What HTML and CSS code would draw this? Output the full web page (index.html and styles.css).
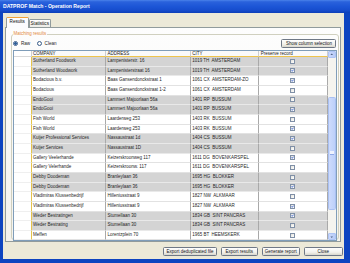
FILE: index.html
```html
<!DOCTYPE html>
<html lang="en">
<head>
  <meta charset="UTF-8">
  <title>DATPROF Match - Operation Report</title>
  <link rel="stylesheet" href="styles.css">
</head>
<body>
  <div class="window">
    <div class="titlebar">DATPROF Match - Operation Report</div>

    <div class="frame">
      <div class="client">
        <!-- Tabs -->
        <div class="tabs">
          <div class="tab active">Results</div>
          <div class="tab">Statistics</div>
        </div>

        <div class="tabpage">
          <fieldset class="group">
            <legend>Matching results</legend>

            <div class="toolbar">
              <label class="radio"><span class="radio-dot on"></span>Raw</label>
              <label class="radio"><span class="radio-dot"></span>Clean</label>
              <button class="btn btn-columns" type="button">Show column selection</button>
            </div>

            <!-- Results grid -->
            <div class="grid">
              <div class="grid-body">
                <div class="row head">
                  <div class="cell rh"></div>
                  <div class="cell">COMPANY</div>
                  <div class="cell">ADDRESS</div>
                  <div class="cell">CITY</div>
                  <div class="cell">Preserve record</div>
                </div>

                <div class="row gray">
                  <div class="cell rh"></div>
                  <div class="cell">Sutherland Foodwork</div>
                  <div class="cell">Lampenisterstr. 16</div>
                  <div class="cell">1019 TH  AMSTERDAM</div>
                  <div class="cell chk"><span class="box"></span></div>
                </div>
                <div class="row gray">
                  <div class="cell rh"></div>
                  <div class="cell">Sutherland Woodwork</div>
                  <div class="cell">Lampenisterstraat 16</div>
                  <div class="cell">1019 TH  AMSTERDAM</div>
                  <div class="cell chk"><span class="box on"><svg viewBox="0 0 10 10"><path d="M2 5 4.2 7.6 8.4 2.2"/></svg></span></div>
                </div>
                <div class="row">
                  <div class="cell rh"></div>
                  <div class="cell">Bodacious b.v.</div>
                  <div class="cell">Baas Gansendonckstraat 1</div>
                  <div class="cell">1061 CX  AMSTERDAM-ZO</div>
                  <div class="cell chk"><span class="box on"><svg viewBox="0 0 10 10"><path d="M2 5 4.2 7.6 8.4 2.2"/></svg></span></div>
                </div>
                <div class="row">
                  <div class="cell rh"></div>
                  <div class="cell">Bodacious</div>
                  <div class="cell">Baas Gansendonckstraat 1-2</div>
                  <div class="cell">1061 CX  AMSTERDAM</div>
                  <div class="cell chk"><span class="box"></span></div>
                </div>
                <div class="row gray">
                  <div class="cell rh"></div>
                  <div class="cell">EndoGooi</div>
                  <div class="cell">Lammert Majoorlaan 56a</div>
                  <div class="cell">1401 RP  BUSSUM</div>
                  <div class="cell chk"><span class="box"></span></div>
                </div>
                <div class="row gray">
                  <div class="cell rh"></div>
                  <div class="cell">EndoGooi</div>
                  <div class="cell">Lammert Majoorlaan 56a</div>
                  <div class="cell">1401 RP  BUSSUM</div>
                  <div class="cell chk"><span class="box on"><svg viewBox="0 0 10 10"><path d="M2 5 4.2 7.6 8.4 2.2"/></svg></span></div>
                </div>
                <div class="row">
                  <div class="cell rh"></div>
                  <div class="cell">Fish World</div>
                  <div class="cell">Laarderweg 253</div>
                  <div class="cell">1403 RK  BUSSUM</div>
                  <div class="cell chk"><span class="box"></span></div>
                </div>
                <div class="row">
                  <div class="cell rh"></div>
                  <div class="cell">Fish World</div>
                  <div class="cell">Laarderweg 253</div>
                  <div class="cell">1403 RK  BUSSUM</div>
                  <div class="cell chk"><span class="box on"><svg viewBox="0 0 10 10"><path d="M2 5 4.2 7.6 8.4 2.2"/></svg></span></div>
                </div>
                <div class="row gray">
                  <div class="cell rh"></div>
                  <div class="cell">Kuijer Professional Services</div>
                  <div class="cell">Nassaustraat 1d</div>
                  <div class="cell">1404 CS  BUSSUM</div>
                  <div class="cell chk"><span class="box on"><svg viewBox="0 0 10 10"><path d="M2 5 4.2 7.6 8.4 2.2"/></svg></span></div>
                </div>
                <div class="row gray">
                  <div class="cell rh"></div>
                  <div class="cell">Kuijer Services</div>
                  <div class="cell">Nassaustraat 1D</div>
                  <div class="cell">1404 CS  BUSSUM</div>
                  <div class="cell chk"><span class="box"></span></div>
                </div>
                <div class="row">
                  <div class="cell rh"></div>
                  <div class="cell">Gallery Veelerhande</div>
                  <div class="cell">Keizerskroonweg 117</div>
                  <div class="cell">1611 DG  BOVENKARSPEL</div>
                  <div class="cell chk"><span class="box on"><svg viewBox="0 0 10 10"><path d="M2 5 4.2 7.6 8.4 2.2"/></svg></span></div>
                </div>
                <div class="row">
                  <div class="cell rh"></div>
                  <div class="cell">Gallery Velerhande</div>
                  <div class="cell">Keizerskroonw. 117</div>
                  <div class="cell">1611 DG  BOVENKARSPEL</div>
                  <div class="cell chk"><span class="box"></span></div>
                </div>
                <div class="row gray">
                  <div class="cell rh"></div>
                  <div class="cell">Debby Doodeman</div>
                  <div class="cell">Branleylaan 36</div>
                  <div class="cell">1695 HG  BLOKKER</div>
                  <div class="cell chk"><span class="box"></span></div>
                </div>
                <div class="row gray">
                  <div class="cell rh"></div>
                  <div class="cell">Debby Doodeman</div>
                  <div class="cell">Branleylaan 36</div>
                  <div class="cell">1695 HG  BLOKKER</div>
                  <div class="cell chk"><span class="box on"><svg viewBox="0 0 10 10"><path d="M2 5 4.2 7.6 8.4 2.2"/></svg></span></div>
                </div>
                <div class="row">
                  <div class="cell rh"></div>
                  <div class="cell">Vladimiras Klussenbedrijf</div>
                  <div class="cell">Hilleniusstraat 9</div>
                  <div class="cell">1827 NW  ALKMAAR</div>
                  <div class="cell chk"><span class="box"></span></div>
                </div>
                <div class="row">
                  <div class="cell rh"></div>
                  <div class="cell">Vladimiras Klussenbedrijf</div>
                  <div class="cell">Hilleniusstraat 9</div>
                  <div class="cell">1827 NW  ALKMAAR</div>
                  <div class="cell chk"><span class="box on"><svg viewBox="0 0 10 10"><path d="M2 5 4.2 7.6 8.4 2.2"/></svg></span></div>
                </div>
                <div class="row gray">
                  <div class="cell rh"></div>
                  <div class="cell">Weder Bestratingen</div>
                  <div class="cell">Stumellaan 30</div>
                  <div class="cell">1834 GB  SINT PANCRAS</div>
                  <div class="cell chk"><span class="box on"><svg viewBox="0 0 10 10"><path d="M2 5 4.2 7.6 8.4 2.2"/></svg></span></div>
                </div>
                <div class="row gray">
                  <div class="cell rh"></div>
                  <div class="cell">Weder Bestrating</div>
                  <div class="cell">Stumellaan 30</div>
                  <div class="cell">1834 GB  SINT PANCRAS</div>
                  <div class="cell chk"><span class="box"></span></div>
                </div>
                <div class="row">
                  <div class="cell rh"></div>
                  <div class="cell">Meffen</div>
                  <div class="cell">Lorentzplein 70</div>
                  <div class="cell">1965 BT  HEEMSKERK</div>
                  <div class="cell chk"><span class="box"></span></div>
                </div>
              </div>

              <!-- Vertical scrollbar -->
              <div class="vscroll">
                <div class="sb-btn"><svg viewBox="0 0 6 4"><path d="M0.8 3.2 3 0.8 5.2 3.2z"/></svg></div>
                <div class="sb-track">
                  <div class="sb-thumb"><span class="grip"></span></div>
                </div>
                <div class="sb-btn"><svg viewBox="0 0 6 4"><path d="M0.8 0.8 3 3.2 5.2 0.8z"/></svg></div>
              </div>
            </div>
          </fieldset>
        </div>

        <!-- Bottom buttons -->
        <div class="actions">
          <button class="btn btn-dedup" type="button">Export deduplicated file</button>
          <button class="btn btn-results" type="button">Export results</button>
          <button class="btn btn-report" type="button">Generate report</button>
          <button class="btn btn-close" type="button">Close</button>
        </div>
      </div>
    </div>
  </div>
</body>
</html>
```

FILE: styles.css
```css
/* General */
* {
  box-sizing: border-box;
}

body {
  margin: 0;
  width: 350px;
  height: 263px;
  overflow: hidden;
  font-family: "Liberation Sans", Arial, sans-serif;
  font-size: 4.5px;
  color: #1e1e1e;
  background: #0d44c0;
}

/* Window chrome */
.window {
  height: 263px;
  display: flex;
  flex-direction: column;
}

.titlebar {
  height: 13px;
  flex: none;
  padding-left: 3px;
  line-height: 12px;
  font-size: 5.1px;
  font-weight: bold;
  color: #fff;
  background: linear-gradient(180deg, #4a82ea 0%, #2a62dc 14%, #1c55d6 50%, #164ccc 80%, #0d3fb8 100%);
}

.frame {
  flex: 1;
  display: flex;
  padding: 0 6px 4px 3px;
  background: #0d44c0;
}

.client {
  flex: 1;
  display: flex;
  flex-direction: column;
  padding: 3px 1.5px 0 1.5px;
  background: #ece9d8;
}

/* Tabs */
.tabs {
  height: 11px;
  flex: none;
  display: flex;
  align-items: flex-end;
  padding-left: 1.5px;
}

.tab {
  width: 21.5px;
  height: 8px;
  margin-left: 0.5px;
  border: 1px solid #919b9c;
  border-bottom: none;
  border-radius: 1.5px 1.5px 0 0;
  background: linear-gradient(#ffffff, #ecebe6);
  font-size: 4.6px;
  line-height: 7px;
  text-align: center;
  color: #111;
}

.tab.active {
  width: 22.5px;
  height: 11px;
  margin-left: 0;
  margin-bottom: -1px;
  position: relative;
  z-index: 1;
  border-top: 1.5px solid #f2a33a;
  background: #fcfcfe;
  line-height: 8.5px;
}

.tabpage {
  height: 215px;
  flex: none;
  display: flex;
  flex-direction: column;
  margin-right: 2px;
  border: 1px solid #919b9c;
  background: linear-gradient(#fdfdfd, #f4f3ee);
}

/* Group box */
.group {
  flex: 1;
  min-width: 0;
  min-height: 0;
  display: flex;
  flex-direction: column;
  margin: 3px 1px 1.5px 5.5px;
  padding: 0 0.8px 1.2px 0.5px;
  border: 1px solid #d0d0bf;
  border-radius: 3px;
}

.group legend {
  padding: 0 1px;
  font-size: 4.5px;
  line-height: 6px;
  color: #e3883a;
}

.toolbar {
  height: 12.5px;
  flex: none;
  display: flex;
  align-items: center;
  padding-left: 0.8px;
}

.radio {
  display: flex;
  align-items: center;
  gap: 2.7px;
  margin-right: 6.7px;
  font-size: 4.6px;
}

.radio-dot {
  width: 5px;
  height: 5px;
  border-radius: 50%;
  border: 0.8px solid #3b5f8c;
  background: radial-gradient(circle, #ffffff 40%, #dcdad0);
}

.radio-dot.on {
  background: radial-gradient(circle, #2f5f9a 0 1.2px, #ffffff 1.5px 60%, #dcdad0);
}

/* Buttons */
.btn {
  height: 9.3px;
  padding: 0;
  font-family: inherit;
  font-size: 4.5px;
  color: #111;
  border: 1px solid #6f7886;
  border-radius: 1.5px;
  background: linear-gradient(#fefefe, #f2f1ec 60%, #d9d7cc);
}

.btn-columns {
  width: 55px;
  height: 8.5px;
  margin-left: auto;
  margin-right: 0.3px;
}

.actions {
  height: 17px;
  flex: none;
  display: flex;
  justify-content: flex-end;
  align-items: flex-start;
  gap: 4px;
  padding-top: 4.7px;
}

.btn-dedup { width: 54px; }
.btn-results { width: 36.5px; }
.btn-report { width: 38.5px; }
.btn-close { width: 38.5px; }

/* Data grid */
.grid {
  flex: 1;
  min-height: 0;
  display: flex;
  border: 1px solid #7f9db9;
  background: #fff;
  overflow: hidden;
}

.grid-body {
  flex: 1;
  overflow: hidden;
}

.row {
  display: grid;
  grid-template-columns: 18px 74.5px 84.7px 68.6px 68.4px;
  height: 9.67px;
}

.cell {
  padding-left: 1.5px;
  border-right: 1px solid #a9a9a9;
  border-bottom: 1px solid #e2e2e2;
  line-height: 8.67px;
  white-space: pre;
  overflow: hidden;
  color: #262626;
}

.cell.rh {
  border-right: 1px solid #e6c44c;
  border-bottom-color: #efefef;
  background: #fff;
}

.row.head {
  height: 6.5px;
}

.head .cell {
  line-height: 5px;
  border-right-color: #cfcfcf;
  border-bottom: 1.5px solid #eec44c;
  background: #fafafa;
  color: #1a1a1a;
}

.head .cell.rh {
  border-bottom: 1px solid #d8d8d8;
  background: #fff;
}

.gray .cell {
  background: #d4d4d4;
  border-bottom-color: #e9e9e9;
}

.gray .cell.rh {
  background: #fff;
  border-bottom-color: #efefef;
}

.cell.chk {
  display: flex;
  justify-content: center;
  align-items: center;
  padding: 0;
}

.box {
  width: 5px;
  height: 5px;
  border: 0.8px solid #7f8fa6;
  background: linear-gradient(135deg, #e2e1da, #ffffff);
  display: flex;
}

.box svg {
  width: 100%;
  height: 100%;
  overflow: visible;
}

.box path {
  fill: none;
  stroke: #1f4fd6;
  stroke-width: 2.6;
}

/* Scrollbar */
.vscroll {
  width: 8px;
  flex: none;
  display: flex;
  flex-direction: column;
  background: #f5f4ef;
}

.sb-btn {
  height: 7px;
  flex: none;
  display: flex;
  align-items: center;
  justify-content: center;
  border: 1px solid #aec4f5;
  border-radius: 1px;
  background: linear-gradient(90deg, #cad8fc, #b8ccf7);
}

.sb-btn svg {
  width: 3.5px;
  height: 2.5px;
}

.sb-btn path {
  fill: #4d6185;
}

.sb-track {
  flex: 1;
  padding-top: 39px;
}

.sb-thumb {
  height: 113px;
  display: flex;
  align-items: center;
  justify-content: center;
  border: 1px solid #a9c0f2;
  border-radius: 1.5px;
  background: linear-gradient(90deg, #cddbfc, #bdd0fa);
}

.grip {
  width: 4px;
  height: 4px;
  background: repeating-linear-gradient(#eef3fe 0 0.6px, #8ea9e8 0.6px 1.2px);
}
```
